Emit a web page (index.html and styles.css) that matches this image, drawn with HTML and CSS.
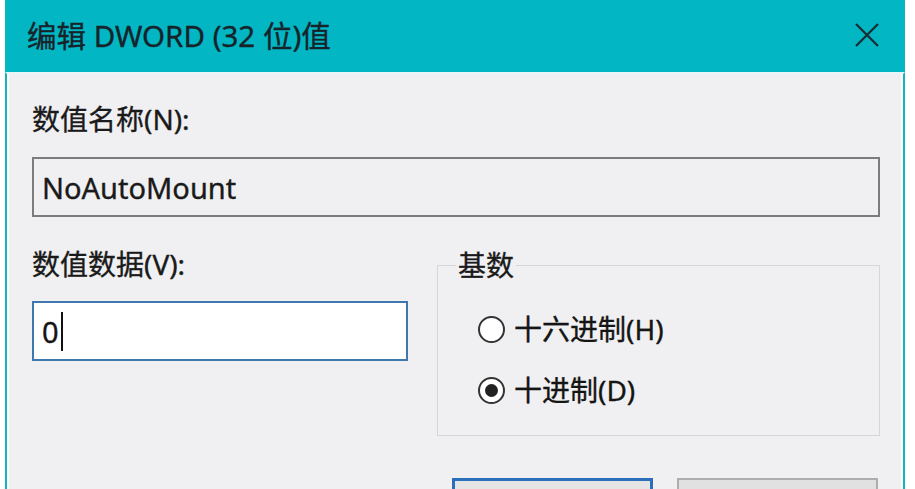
FILE: index.html
```html
<!DOCTYPE html>
<html lang="zh-CN">
<head>
<meta charset="utf-8">
<title>编辑 DWORD (32 位)值</title>
<link rel="stylesheet" href="styles.css">
</head>
<body>
<div class="dialog">
  <div class="titlebar">
    <span class="title">编辑 DWORD (32 位)值</span>
    <svg class="close" width="26" height="26" viewBox="0 0 26 26" aria-label="关闭">
      <path d="M2 2 L24 24 M24 2 L2 24" stroke="#1d2b33" stroke-width="2.2" fill="none"/>
    </svg>
  </div>
  <div class="content">
    <div class="label">数值名称(N):</div>
    <div class="field field-readonly">NoAutoMount</div>
    <div class="row">
      <div class="col-left">
        <div class="label">数值数据(V):</div>
        <div class="field field-active"><span>0</span><span class="caret"></span></div>
      </div>
      <fieldset class="group">
        <legend class="legend">基数</legend>
        <div class="radio"><span class="dot"></span><span>十六进制(H)</span></div>
        <div class="radio"><span class="dot dot-on"></span><span>十进制(D)</span></div>
      </fieldset>
    </div>
    <div class="buttons">
      <div class="btn btn-primary"></div>
      <div class="btn"></div>
    </div>
  </div>
</div>
</body>
</html>
```
FILE: styles.css
```css
html, body {
  margin: 0;
  padding: 0;
  background: #ffffff;
  width: 915px;
  height: 489px;
  overflow: hidden;
}
body {
  font-family: "Noto Sans", "Noto Sans CJK SC", sans-serif;
  color: #151515;
  -webkit-text-stroke: 0.35px currentColor;
}
.dialog {
  margin-left: 5px;
  width: 900px;
  height: 489px;
  display: flex;
  flex-direction: column;
  background: #f0f0f2;
  overflow: hidden;
}
.titlebar {
  height: 72px;
  flex: none;
  background: #02b6c3;
  display: flex;
  align-items: center;
  justify-content: space-between;
  padding: 0 25px 0 22px;
  box-sizing: border-box;
}
.title {
  font-size: 29.5px;
  line-height: 36px;
  color: #17232a;
}
.close {
  display: block;
  margin-top: -2px;
}
.content {
  flex: 1;
  min-height: 0;
  overflow: hidden;
  border-left: 2px solid #14b3bf;
  border-right: 2px solid #14b3bf;
  border-top: 2px solid #e9f6f8;
  padding: 26px 23px 0 25px;
  box-shadow: inset 2px 0 0 #f9fbfc, inset -2px 0 0 #f9fbfc;
  display: flex;
  flex-direction: column;
}
.label {
  font-size: 28px;
  line-height: 38px;
  color: #1a1a1a;
}
.field {
  height: 60px;
  flex: none;
  box-sizing: border-box;
  display: flex;
  align-items: center;
  padding-left: 8px;
  font-size: 29px;
}
.field-readonly {
  margin-top: 19px;
  border: 2px solid #7c7c7c;
  background: #f0f0f2;
  color: #1a1a1a;
}
.row {
  margin-top: 28px;
  display: flex;
  gap: 29px;
  flex: none;
}
.col-left {
  width: 376px;
  flex: none;
}
.field-active {
  margin-top: 18px;
  border: 2px solid #3f77ae;
  background: #ffffff;
}
.caret {
  width: 2px;
  height: 39px;
  background: #111;
  margin-left: 2px;
}
.group {
  flex: 1;
  margin: 1px 0 0 0;
  padding: 26px 0 0 36px;
  border: 1px solid #d6d6d8;
  height: 190px;
  box-sizing: border-box;
  display: flex;
  flex-direction: column;
  gap: 23px;
}
.legend {
  font-size: 28px;
  line-height: 38px;
  padding: 0 2px;
  margin-left: -18px;
  color: #1a1a1a;
}
.radio {
  display: flex;
  align-items: center;
  font-size: 28px;
  line-height: 38px;
  gap: 9px;
  margin-left: 4px;
}
.dot {
  width: 27px;
  height: 27px;
  box-sizing: border-box;
  border: 2px solid #333;
  border-radius: 50%;
  background: #fff;
  display: flex;
  align-items: center;
  justify-content: center;
}
.dot-on::after {
  content: "";
  width: 13px;
  height: 13px;
  border-radius: 50%;
  background: #222;
}
.buttons {
  margin-top: 42px;
  display: flex;
  gap: 24px;
  padding-left: 420px;
  flex: none;
}
.btn {
  width: 201px;
  height: 40px;
  box-sizing: border-box;
  border: 2px solid #adadad;
  background: #e1e1e1;
}
.btn-primary {
  border: 3px solid #2b6fba;
  background: #e5e5e5;
}
```
